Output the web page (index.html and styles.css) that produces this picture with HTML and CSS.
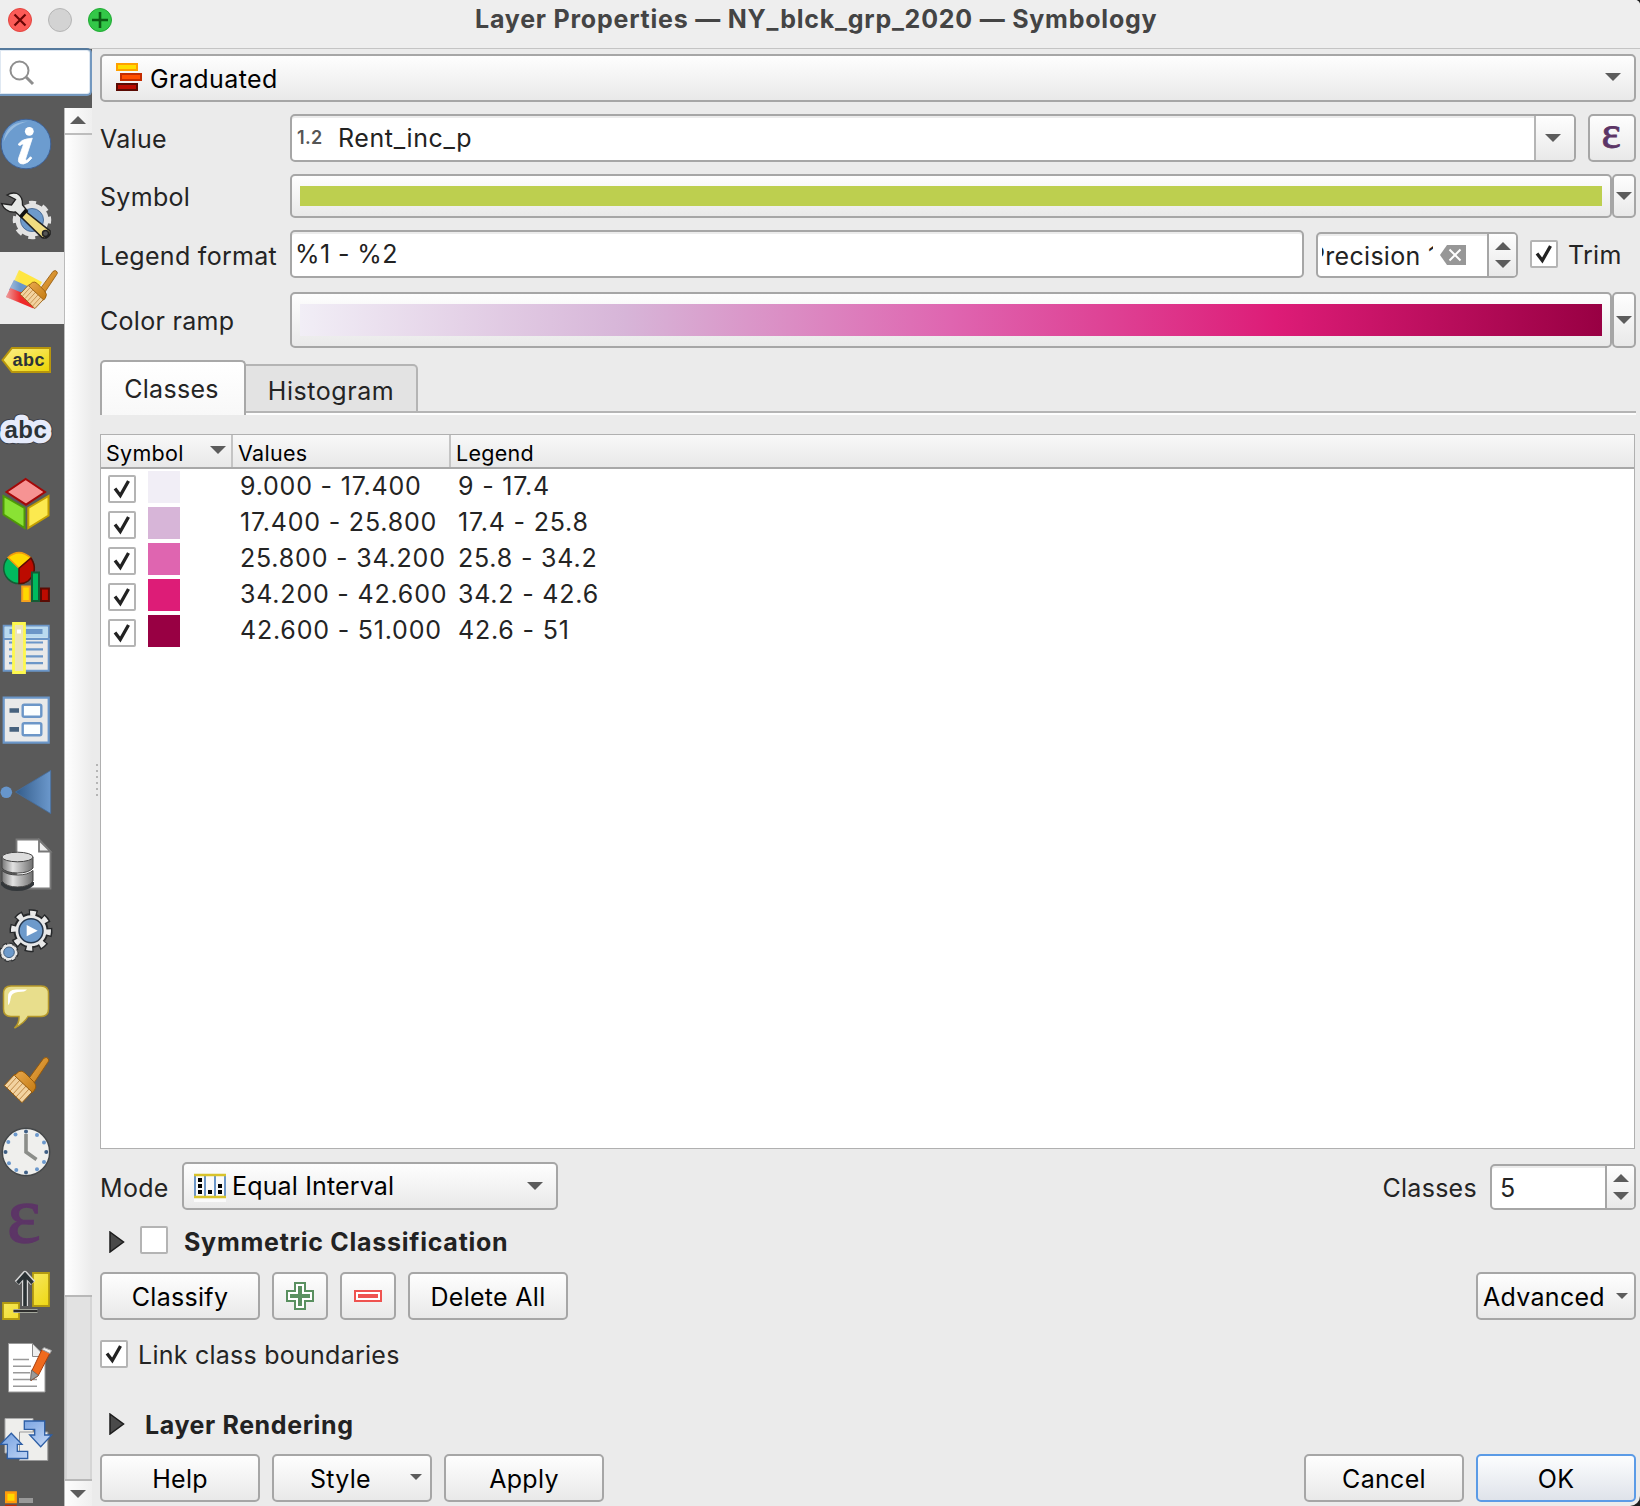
FILE: index.html
```html
<!DOCTYPE html>
<html lang="en">
<head>
<meta charset="utf-8">
<title>Layer Properties</title>
<link rel="stylesheet" href="styles.css">
</head>
<body>
<svg width="0" height="0" class="defs">
  <defs>
    <linearGradient id="gYellow" x1="0" y1="0" x2="1" y2="1"><stop offset="0" stop-color="#fcf08a"/><stop offset="1" stop-color="#ecd400"/></linearGradient>
    <linearGradient id="gWood" x1="0" y1="0" x2="1" y2="1"><stop offset="0" stop-color="#e9a94e"/><stop offset="1" stop-color="#c47a10"/></linearGradient>
    <linearGradient id="gCone" x1="0" y1="0" x2="1" y2="0"><stop offset="0" stop-color="#335c8a"/><stop offset="1" stop-color="#6b98cc"/></linearGradient>
    <linearGradient id="gMetal" x1="0" y1="0" x2="1" y2="0"><stop offset="0" stop-color="#777"/><stop offset=".35" stop-color="#e2e2e2"/><stop offset="1" stop-color="#6e6e6e"/></linearGradient>
    <linearGradient id="gArrow" x1="0" y1="0" x2="1" y2="1"><stop offset="0" stop-color="#5f92dc"/><stop offset="1" stop-color="#dbe7fb"/></linearGradient>
    <linearGradient id="gFade" x1="0" y1="0" x2="1" y2="0"><stop offset="0" stop-color="#ececec" stop-opacity=".6"/><stop offset=".4" stop-color="#ececec" stop-opacity="0"/></linearGradient>
    <symbol id="brush" viewBox="0 0 64 72" overflow="visible">
      <path d="M27 37 43.500 14.500q3-2.500 5 .500.800 2-.800 3.500L32 42z" fill="url(#gWood)" stroke="#94590b" stroke-width="1"/>
      <path d="M4.300 41.500 15 30 33 47 22 58.700z" fill="#f3d3a0" stroke="#94590b" stroke-width="1"/>
      <path d="m7 44 9-10M10 47l10-11M13 50l10-11M16 53l10-11M19 56l10-11" stroke="#c08a48" stroke-width="1"/>
      <path d="M14.500 31.500 19 27.500q3-1.500 6 1.500l8.500 8.500q4 4.500 1 8.500L32.500 48.500z" fill="url(#gWood)" stroke="#94590b" stroke-width="1"/>
    </symbol>
    <symbol id="tick" viewBox="0 0 24 24"><path d="M5 11.500 10.300 18.500 18.500 4" fill="none" stroke="#222" stroke-width="3.300"/></symbol>
    <symbol id="down" viewBox="0 0 16 8"><path d="M0 0h16L8 8z" fill="#5c5c5c"/></symbol>
    <symbol id="up" viewBox="0 0 16 8"><path d="M0 8h16L8 0z" fill="#5c5c5c"/></symbol>
    <symbol id="fold" viewBox="0 0 16 22"><path d="M1 1 14.500 11 1 21z" fill="#4a4a4a" stroke="#1c1c1c" stroke-width="1.500"/></symbol>
  </defs>
</svg>

<div class="window">
  <header class="titlebar">
    <div class="lights">
      <svg width="24" height="24" viewBox="0 0 24 24"><circle cx="12" cy="12" r="11.500" fill="#fc5b57" stroke="#e2443f"/><path d="m6.500 6.500 11 11m0-11-11 11" stroke="#6b0505" stroke-width="2.200"/></svg>
      <svg width="24" height="24" viewBox="0 0 24 24"><circle cx="12" cy="12" r="11.500" fill="#d3d3d3" stroke="#b5b5b5"/></svg>
      <svg width="24" height="24" viewBox="0 0 24 24"><circle cx="12" cy="12" r="11.500" fill="#33c748" stroke="#1faa33"/><path d="M4 12h16M12 4v16" stroke="#0b5c14" stroke-width="2.600"/></svg>
    </div>
    <h1 class="title">Layer Properties — NY_blck_grp_2020 — Symbology</h1>
  </header>

  <div class="body">
    <aside class="side">
      <div class="search">
        <svg width="26" height="26" viewBox="0 0 26 26" fill="none" stroke="#8e8e8e"><circle cx="10.500" cy="10.500" r="9" stroke-width="2"/><path d="m17 17 7 7" stroke-width="3"/></svg>
      </div>
      <div class="side-main">
        <nav class="icons">
          <svg class="item" viewBox="0 0 64 72"><circle cx="26" cy="36" r="24.800" fill="#6c9ccf" stroke="#3e6196" stroke-width="1"/><path d="M3.500 34Q6 14 28 13.500q-17 3-24.500 20.500" fill="#a3c3e4" opacity=".8"/><circle cx="29.300" cy="23.300" r="4.400" fill="#fff"/><path d="M18 36.500q3.500-5 9-5.600l5.300-.7-6.500 20q-.7 3 1.500 1.700l3.200-3.200 1.400 1.400q-4 5.300-8.500 5.900-6.300 0-4.700-6l4.500-12.800q.3-2.500-3.200.4z" fill="#fff" stroke="#fff" stroke-width=".8"/></svg>
          <svg class="item" viewBox="0 0 64 72"><circle cx="32" cy="40" r="15.500" fill="#e3e3e3" stroke="#e3e3e3" stroke-width="2"/><circle cx="32" cy="40" r="17" fill="none" stroke="#e3e3e3" stroke-width="4.500" stroke-dasharray="6.675 6.675" transform="rotate(-11 32 40)"/><circle cx="32" cy="40" r="11.500" fill="#6d9acb" stroke="#4d6f99"/><path d="M7 15q5-3 10-1.500 6 3 5.500 11.500l5 6-6 6.500-6-5.500q-10 1-14-8.500l10 1.500 4-5.500z" fill="#e6e8e6" stroke="#222" stroke-width="1.300"/><path d="m25 31-4.500 5.500 21.500 21q5 2 8-3.500v-3z" fill="#f0dc80" stroke="#222" stroke-width="1.600"/><path d="m26.500 30-6 7" stroke="#111" stroke-width="3.500"/><circle cx="45.500" cy="53.500" r="3" fill="#555" stroke="#222" stroke-width="1.500"/></svg>
          <svg class="item selected" viewBox="0 0 64 72"><path d="m19 18 23 12-5 10-23-11z" fill="#ffe640"/><path d="m14 28 24 11-5 9-24-10z" fill="#6795c9"/><path d="m10.500 36 24 10-1 10.500L6 45z" fill="#ee2a2a"/><path d="m19 18 23 12-9 27L6 45z" fill="url(#gFade)"/><use href="#brush" width="64" height="72" transform="translate(16.400 7.300) scale(.84)"/></svg>
          <svg class="item" viewBox="0 0 64 72"><path d="M2.500 36 12 24h38v24H12z" fill="url(#gYellow)" stroke="#b8960c" stroke-width="2"/><text x="12.500" y="41.800" class="abc small">abc</text></svg>
          <svg class="item" viewBox="0 0 64 72"><g class="abc big"><text x="4.500" y="41.500" stroke="#3c3f48" stroke-width="12.500">abc</text><text x="4.500" y="41.500" stroke="#e6ebfb" stroke-width="10.500">abc</text><text x="4.500" y="41.500">abc</text></g></svg>
          <svg class="item" viewBox="0 0 64 72" stroke-width="2"><path d="M25.700 11 45 24 26 36.700 6.500 24z" fill="#f69393" stroke="#a40808"/><path d="M3.500 28 24.500 40v20L3.500 46.500z" fill="#8ae234" stroke="#4e9a06"/><path d="M28.300 40 48.500 28v19.500L28.300 60z" fill="#fce94f" stroke="#c4a000"/></svg>
          <svg class="item" viewBox="0 0 64 72" stroke-width="1.500"><circle cx="19" cy="28.300" r="15.300" fill="#00bb5e" stroke="#145c35"/><path d="M19 28.300 8 17.500Q19 7.500 31 18z" fill="#ffd800" stroke="#f09a10"/><path d="M19 28.300 31 18q8 13-3 23-4 3-9 2.500z" fill="#bc0b00" stroke="#5a0c04"/><path d="M22.200 46.400h7.600v14.500h-7.600z" fill="#ffd800" stroke="#f7a21b" stroke-width="2"/><path d="M32 32.500h7v28.400h-7z" fill="#00bb5e" stroke="#145c35" stroke-width="2"/><path d="M41 48.500h7.900v12.400H41z" fill="#bc0b00" stroke="#5a0c04" stroke-width="2"/></svg>
          <svg class="item" viewBox="0 0 64 72"><path d="M3.700 13.700h45v45h-45z" fill="#e9e9e9" stroke="#6b96c8" stroke-width="2"/><path d="M4.700 14.700h43v11h-43z" fill="#b9daf0"/><path d="M3 27h47" stroke="#6b96c8" stroke-width="2"/><path d="M9.500 19.500h33" stroke="#6b96c8" stroke-width="5"/><path d="M9 30.500h34M9 37.300h34M9 44.300h34M9 51.200h34" stroke="#6b96c8" stroke-width="2.200"/><path d="M13.500 11.500h11v49h-11z" fill="#ece4b7" stroke="#fdf84e" stroke-width="2.800"/><path d="M17 17.500h4v4h-4z" fill="#fff"/></svg>
          <svg class="item" viewBox="0 0 64 72"><path d="M3.700 13.700h45v45h-45z" fill="#e9e9e9" stroke="#6b96c8" stroke-width="2.200"/><rect x="22.700" y="20.700" width="18.600" height="12" rx="1.500" fill="#fbfeff" stroke="#6b96c8" stroke-width="2.400"/><rect x="22.700" y="39.300" width="18.600" height="12" rx="1.500" fill="#fbfeff" stroke="#6b96c8" stroke-width="2.400"/><path d="M9.500 26.500H19M9.500 45.400H19" stroke="#47627e" stroke-width="4.600"/></svg>
          <svg class="item" viewBox="0 0 64 72"><circle cx="6.300" cy="36.300" r="5.800" fill="#6796cc"/><path d="m15.500 36 35.200-21.600v43.200z" fill="url(#gCone)" stroke="#456f9f" stroke-width=".8"/></svg>
          <svg class="item" viewBox="0 0 64 72"><path d="M16.500 11.500H39l11.500 12v37h-34z" fill="#fff" stroke="#7b7b7b" stroke-width="1.800"/><path d="M39 12v11.500h11.500z" fill="#eee" stroke="#777" stroke-width="1.800"/><path d="M1 54v3q5 6 16 6t17-6v-3z" fill="#33373a"/><path d="M2 29v11q4 5 15.500 5T33 40V29z" fill="url(#gMetal)" stroke="#444"/><path d="M2 42.500V53q4 6 15.500 6T33 53V42.500q-5 4.500-15.500 4.500T2 42.500" fill="url(#gMetal)" stroke="#444"/><ellipse cx="17.500" cy="29" rx="15.500" ry="4.800" fill="#dcdcdc" stroke="#444"/></svg>
          <svg class="item" viewBox="0 0 64 72"><g fill="none"><circle cx="31" cy="30.700" r="18" stroke="#26282a" stroke-width="7" stroke-dasharray="8.137 6" transform="rotate(-8 31 30.700)"/><circle cx="31" cy="30.700" r="16.500" fill="#e8e8e8" stroke="#26282a" stroke-width="2"/><circle cx="31" cy="30.700" r="17.500" stroke="#e8e8e8" stroke-width="5" stroke-dasharray="5.600 8.144" transform="rotate(-4.500 31 30.700)"/></g><circle cx="31" cy="30.700" r="12" fill="#6d9acb" stroke="#26384e" stroke-width="1.500"/><path d="m26.700 25 11 5.700-11 5.500z" fill="#fff"/><circle cx="9" cy="52.300" r="8" fill="#e8e8e8" stroke="#2d2f31" stroke-width="3.500" stroke-dasharray="4 2.283"/><circle cx="9" cy="52.300" r="7.800" fill="#e8e8e8" stroke="#e8e8e8" stroke-width="1.500" stroke-dasharray="3 3.126"/><circle cx="9" cy="52.300" r="5.300" fill="#6d9acb" stroke="#43607f"/></svg>
          <svg class="item" viewBox="0 0 64 72"><path d="M11 14h30q7.500 0 7.500 7.500V37q0 7.500-7.500 7.500H28q-4 7-13.500 11.500 5-5 4.500-11.500h-8Q3.500 44.500 3.500 37V21.500Q3.500 14 11 14z" fill="#e8de8c" stroke="#b5982a" stroke-width="1.500"/><path d="M8 33V25q0-7.500 8-7.500h11q-1.500 2.500-9 2.500-7 .500-7.500 7-.500 5-2.500 6" fill="#fff"/></svg>
          <svg class="item" viewBox="0 0 64 72"><use href="#brush" width="64" height="72"/></svg>
          <svg class="item" viewBox="0 0 64 72"><circle cx="26" cy="36" r="23.700" fill="#efefed" stroke="#45484a" stroke-width="1.500"/><g fill="#6b98cc"><circle cx="37" cy="19" r="2"/><circle cx="44" cy="26.500" r="2"/><circle cx="44" cy="46" r="2"/><circle cx="37" cy="53.300" r="2"/><circle cx="16.300" cy="54" r="2"/><circle cx="9" cy="47.300" r="2"/><circle cx="8.300" cy="26" r="2"/><circle cx="15.500" cy="18.500" r="2"/></g><g fill="#3f5f85"><circle cx="26" cy="15.500" r="2"/><circle cx="46.300" cy="36" r="2"/><circle cx="26" cy="56.500" r="2"/><circle cx="5.500" cy="36" r="2"/></g><path d="M26 18v18l10.500 7.500" fill="none" stroke="#8b8d89" stroke-width="3.600"/></svg>
          <svg class="item" viewBox="0 0 64 72"><text x="7" y="54" class="eps">ε</text></svg>
          <svg class="item" viewBox="0 0 64 72"><path d="M33 13h16v33H33zM3 43h16v16H3z" fill="url(#gYellow)" stroke="#b39a10" stroke-width="1.800"/><path d="M25 46V14M17 23l8-9 8 9" fill="none" stroke="#d8d8d8" stroke-width="6" stroke-linejoin="round"/><path d="M13.500 51h24" stroke="#a4a79c" stroke-width="4"/><path d="M25 46V14M17.500 23l7.500-8.500 7.500 8.500" fill="none" stroke="#2b3235" stroke-width="3.600"/><path d="M13.500 51h24" stroke="#222" stroke-width="1.800"/></svg>
          <svg class="item" viewBox="0 0 64 72"><path d="M8.500 11.500h24l12.500 13v35.500H8.500z" fill="#fff" stroke="#999"/><path d="M32.500 11.500v13H45z" fill="#eee" stroke="#888"/><path d="M13 27.500h16M13 34.200h18M13 40.800h17M13 47.500h24M13 54.200h24" stroke="#999" stroke-width="1.600"/><path d="m42 17.500 8 3.500-12 23-7 4.500.500-9z" fill="#f06a1d" stroke="#a83e0c"/><path d="m31.500 38 7 5.500-8 5z" fill="#999" stroke="#666" stroke-width=".8"/><path d="m42 17.500 2-2 7.500 3-1.500 3z" fill="#eee" stroke="#999"/></svg>
          <svg class="item" viewBox="0 0 64 72"><path d="M5 14.500h28V49H5z" fill="#eeeeec" stroke="#aaa"/><path d="M19.500 28h28.300v28.500H19.500z" fill="#eeeeec" stroke="#999"/><path d="M24.300 17h20.400v14h7l-11 11.700L29.700 31h5v-5.700H24.300zM27.700 54.500H7.300V40.300H.5l10.800-11 10.700 11h-4.700v7h10.400z" fill="url(#gArrow)" stroke="#2d5ea5" stroke-width="1.300"/></svg>
          <svg class="item" viewBox="0 0 64 72"><path d="M6.200 16.500h9.500V26H6.200z" fill="#ffd800" stroke="#ff9a0c" stroke-width="2.400"/><path d="M19 22h14v5H19z" fill="#999"/><path d="M5 28.700h11.700V30H5z" fill="#c22b00"/></svg>
        </nav>
        <div class="scroll">
          <div class="sbtn top"><svg width="16" height="8"><use href="#up"/></svg></div>
          <div class="handle"></div>
          <div class="groove"></div>
          <div class="sbtn bottom"><svg width="16" height="8"><use href="#down"/></svg></div>
        </div>
      </div>
    </aside>
    <div class="splitter"></div>

    <main class="panel">
      <div class="box btn renderer">
        <svg width="26" height="28" viewBox="0 0 26 28"><path d="M1 1h20v6H1z" fill="#ffdd00" stroke="#ffa000" stroke-width="2"/><path d="M5 11h20v6H5z" fill="#ff4d00" stroke="#c42b00" stroke-width="2"/><path d="M1 21h20v6H1z" fill="#bb0b00" stroke="#5a0a03" stroke-width="2"/></svg>
        <span class="t-grad">Graduated</span>
        <svg class="arrow" width="16" height="8"><use href="#down"/></svg>
      </div>

      <div class="row value">
        <label class="lab l-value">Value</label>
        <div class="box field valuebox">
          <span class="num">1.2</span><span class="t-rent">Rent_inc_p</span>
          <div class="drop"><svg width="16" height="8"><use href="#down"/></svg></div>
        </div>
        <div class="box btn exprbtn"><svg width="24" height="40"><text x="1.500" y="30" class="eps mini">ε</text></svg></div>
      </div>

      <div class="row symbol">
        <label class="lab l-symbol">Symbol</label>
        <div class="box btn preview"><div class="bar green"></div></div>
        <div class="box btn narrow"><svg width="16" height="8"><use href="#down"/></svg></div>
      </div>

      <div class="row legend">
        <label class="lab l-legend">Legend format</label>
        <div class="box field fmt"><span class="t-fmt">%1 - %2</span></div>
        <div class="box field precision">
          <div class="clip"><span>Precision 1</span></div>
          <svg class="clear" width="26" height="20" viewBox="0 0 26 20"><path d="M0 10 7 0h19v20H7z" fill="#979797"/><path d="m9.500 4.500 11 11m0-11-11 11" stroke="#fff" stroke-width="2"/></svg>
          <div class="spin"><svg width="16" height="8"><use href="#up"/></svg><svg width="16" height="8"><use href="#down"/></svg></div>
        </div>
        <svg class="check trimcheck"><use href="#tick"/></svg>
        <span class="lab t-trim">Trim</span>
      </div>

      <div class="row ramp">
        <label class="lab l-ramp">Color ramp</label>
        <div class="box btn preview"><div class="bar pinks"></div></div>
        <div class="box btn narrow"><svg width="16" height="8"><use href="#down"/></svg></div>
      </div>

      <div class="tabs">
        <div class="tab active"><span class="t-tab1">Classes</span></div>
        <div class="tab"><span class="t-tab2">Histogram</span></div>
      </div>

      <div class="table">
        <div class="thead">
          <div class="th c1"><span class="h1">Symbol</span><svg width="16" height="8"><use href="#down"/></svg></div>
          <div class="th c2"><span class="h2">Values</span></div>
          <div class="th c3"><span class="h3">Legend</span></div>
        </div>
        <div class="tr"><svg class="check"><use href="#tick"/></svg><i class="sw s1"></i><span class="v">9.000 - 17.400</span><span class="g">9 - 17.4</span></div>
        <div class="tr"><svg class="check"><use href="#tick"/></svg><i class="sw s2"></i><span class="v">17.400 - 25.800</span><span class="g">17.4 - 25.8</span></div>
        <div class="tr"><svg class="check"><use href="#tick"/></svg><i class="sw s3"></i><span class="v">25.800 - 34.200</span><span class="g">25.8 - 34.2</span></div>
        <div class="tr"><svg class="check"><use href="#tick"/></svg><i class="sw s4"></i><span class="v">34.200 - 42.600</span><span class="g">34.2 - 42.6</span></div>
        <div class="tr"><svg class="check"><use href="#tick"/></svg><i class="sw s5"></i><span class="v">42.600 - 51.000</span><span class="g">42.6 - 51</span></div>
      </div>

      <div class="row mode">
        <label class="lab l-mode">Mode</label>
        <div class="box btn modebox">
          <svg width="32" height="32" viewBox="0 0 32 32"><path d="M0 0h32v32H0z" fill="#fafafa"/><path d="M1 5v22M11 5v22M21 5v22M31 5v22" stroke="#6b96c8" stroke-width="2"/><path d="M0 5h32M0 27h32" stroke="#d8c32c" stroke-width="2.500"/><path d="M4 8h4v4H4zM4 14h4v4H4zM4 20h4v4H4zM14 20h4v4h-4zM24 14h4v4h-4zM24 20h4v4h-4z"/></svg>
          <span class="t-equal">Equal Interval</span>
          <svg class="arrow" width="16" height="8"><use href="#down"/></svg>
        </div>
        <label class="lab l-classes">Classes</label>
        <div class="box field count"><span>5</span><div class="spin"><svg width="16" height="8"><use href="#up"/></svg><svg width="16" height="8"><use href="#down"/></svg></div></div>
      </div>

      <div class="row symm"><svg width="16" height="22"><use href="#fold"/></svg><span class="check empty"></span><b class="t-symm">Symmetric Classification</b></div>

      <div class="row actions">
        <div class="box btn wide"><span class="t-classify">Classify</span></div>
        <div class="box btn sq"><svg width="28" height="28" viewBox="0 0 28 28"><path d="M9 1h10v8h8v10h-8v8H9v-8H1V9h8z" fill="#fff" stroke="#5a9060" stroke-width="2"/><path d="M14 4v20M4 14h20" stroke="#5a9060" stroke-width="4"/></svg></div>
        <div class="box btn sq"><svg width="28" height="12" viewBox="0 0 28 12"><path d="M1 1h26v10H1z" fill="#fff" stroke="#ef5350" stroke-width="2"/><path d="M4 6h20" stroke="#ef5350" stroke-width="4"/></svg></div>
        <div class="box btn wide"><span class="t-delete">Delete All</span></div>
        <div class="box btn wide end adv"><span class="t-adv">Advanced</span><svg width="12" height="6"><use href="#down"/></svg></div>
      </div>

      <div class="row link"><svg class="check"><use href="#tick"/></svg><span class="lab t-link">Link class boundaries</span></div>

      <div class="row rendering"><svg width="16" height="22"><use href="#fold"/></svg><b class="t-render">Layer Rendering</b></div>

      <div class="row footer">
        <div class="box btn wide"><span class="t-help">Help</span></div>
        <div class="box btn wide style"><span class="t-style">Style</span><svg width="12" height="6"><use href="#down"/></svg></div>
        <div class="box btn wide"><span class="t-apply">Apply</span></div>
        <div class="box btn wide end"><span class="t-cancel">Cancel</span></div>
        <div class="box btn wide ok"><span>OK</span></div>
      </div>
    </main>
  </div>
</div>
</body>
</html>
```
FILE: styles.css
```css
* { box-sizing: border-box; }
body { margin: 0; background: #1e1e1e; font: 25px/30px Inter, "Liberation Sans", sans-serif; color: #000; letter-spacing: .3px; }
svg { display: block; flex: none; }
.defs { position: absolute; }
span, label, b { white-space: nowrap; }

.window { width: 1640px; height: 1506px; overflow: hidden; background: #ebebeb; border-radius: 0 5px 10px 0; display: flex; flex-direction: column; }
.titlebar { flex: none; height: 49px; background: #eee; border-bottom: 1px solid #c4c4c4; display: flex; }
.lights { display: flex; gap: 16px; padding: 8px 0 0 8px; }
.title { margin: 4px 0 0 363px; font-size: 25px; line-height: 30px; font-weight: 700; color: #444; white-space: nowrap; letter-spacing: .78px; }

.body { flex: 1; min-height: 0; display: flex; }
.side { width: 92px; flex: none; display: flex; flex-direction: column; background: #5a5a5a; }
.search { height: 48px; margin-top: -1px; flex: none; background: #fff; border: 2px solid #7398bf; border-left: 0; border-top-color: #55799c; border-radius: 0 5px 5px 0; box-shadow: inset 0 0 0 1px #dfe8f2; padding: 10px 0 0 9px; }
.side-main { flex: 1; min-height: 0; margin-top: 12px; display: flex; }
.icons { width: 64px; overflow: hidden; }
.item { width: 64px; height: 72px; overflow: visible; }
.item.selected { background: #ececec; }
.abc { font-family: "Liberation Sans", sans-serif; font-weight: 700; fill: #2b3338; letter-spacing: 0; stroke-linejoin: round; }
.small { font-size: 18px; letter-spacing: .5px; }
.big { font-size: 24px; letter-spacing: .5px; }
.eps { font-family: "Liberation Serif", serif; font-size: 80px; fill: #5c3566; stroke: #5c3566; stroke-width: 1.500px; letter-spacing: 0; }
.mini { font-size: 46px; stroke-width: .8px; }
.scroll { width: 28px; display: flex; flex-direction: column; border-left: 1px solid #bbb; background: linear-gradient(90deg, #fff, #ebebeb); }
.sbtn { flex: none; display: flex; justify-content: center; padding-right: 1px; background: linear-gradient(90deg, #fdfdfd, #efefef); }
.top { height: 27px; border-bottom: 2px solid #bdbdbd; padding-top: 8px; }
.handle { height: 1160px; flex: none; }
.groove { flex: 1; background: #e2e2e2; border: 2px solid #b8b8b8; border-width: 2px 0; box-shadow: inset 2px 0 #d5d5d5, inset -2px 0 #d5d5d5; }
.bottom { height: 25px; padding-top: 9px; }
.splitter { width: 8px; flex: none; margin-top: 713px; height: 36px; background: linear-gradient(#b5b5b5 2px, transparent 2px) 4px 2px / 2px 6px repeat-y; }

.panel { width: 1536px; display: flex; flex-direction: column; padding-top: 5px; }
.row { display: flex; flex: none; }
.box { border: 2px solid #a6a6a6; border-radius: 5px; display: flex; align-items: center; flex: none; }
.btn { background: linear-gradient(#fefefe, #e9e9e9); }
.field { background: #fff; box-shadow: inset 0 2px #ececec; }
.lab { color: #242424; flex: none; }
.arrow { margin-left: auto; }

.renderer { height: 48px; padding: 0 13px 2px 14px; }
.t-grad { margin: 4px 0 0 8px; letter-spacing: .4px; }
.value { height: 48px; margin-top: 12px; align-items: center; }
.row > label.lab { width: 190px; }
.row > label.l-value, .row > label.l-symbol { padding-top: 2px; }
.valuebox { width: 1286px; height: 48px; padding-left: 5px; color: #222; }
.num { font-size: 18px; font-weight: 600; color: #555; width: 41px; }
.t-rent { letter-spacing: .6px; }
.drop { margin-left: auto; height: 44px; width: 40px; border-left: 2px solid #b5b5b5; background: linear-gradient(#fefefe, #e9e9e9); display: flex; align-items: center; justify-content: center; padding: 0 4px 1px 0; border-radius: 0 3px 3px 0; }
.exprbtn { width: 48px; height: 48px; margin-left: 12px; padding-left: 10px; }

.symbol { margin-top: 12px; height: 44px; align-items: center; }
.preview { width: 1322px; height: 100%; padding-left: 8px; }
.bar { width: 1302px; }
.green { height: 20px; background: #bdcf4f; }
.pinks { height: 32px; background: linear-gradient(90deg, #f1eef6, #d7b5d8 25%, #df65b0 50%, #dd1c77 75%, #980043); }
.narrow { width: 24px; height: 100%; justify-content: center; }

.legend { margin-top: 12px; height: 48px; }
.legend > label.lab { padding-top: 11px; }
.fmt { width: 1014px; height: 48px; padding-left: 3px; color: #222; }
.t-fmt { letter-spacing: .4px; }
.precision { width: 202px; height: 46px; margin: 2px 0 0 12px; color: #222; padding-left: 4px; }
.clip { width: 111px; overflow: hidden; }
.clip span { display: block; margin: 2px 0 0 -13px; }
.clear { margin-left: 7px; }
.spin { margin-left: auto; width: 30px; height: 42px; border-left: 2px solid #a6a6a6; border-radius: 0 3px 3px 0; background: linear-gradient(#fefefe, #e9e9e9); display: flex; flex-direction: column; align-items: center; justify-content: center; gap: 10px; }
.precision .spin, .count .spin { width: 29px; }
.check { width: 28px; height: 28px; border: 2px solid #b4b4b4; background: #fff; flex: none; border-radius: 2px; overflow: hidden; }
.trimcheck { margin: 10px 0 0 12px; }
.t-trim { margin: 10px 0 0 10px; }

.ramp { margin-top: 14px; height: 56px; align-items: center; }
.l-ramp { padding-top: 2px; }

.tabs { height: 55px; margin-top: 12px; display: flex; align-items: flex-start; background: linear-gradient(#b4b4b4 2px, #fdfdfd 2px) 0 51px / 100% 4px no-repeat; }
.tab { width: 172px; height: 49px; margin-top: 4px; border: 2px solid #b4b4b4; border-left: 0; border-radius: 0 5px 0 0; background: #e3e3e3; color: #242424; display: flex; justify-content: center; padding-top: 10px; }
.t-tab2 { letter-spacing: .55px; }
.tab.active { width: 146px; height: 55px; margin: 0; border: 2px solid #a8a8a8; border-bottom: 0; border-radius: 5px 5px 0 0; background: linear-gradient(#fff, #f8f8f8); padding: 12px 3px 0 0; }

.table { width: 1535px; height: 715px; margin-top: 19px; border: 1px solid #b0b0b0; background: #fff; flex: none; }
.thead { height: 34px; display: flex; background: linear-gradient(#f8f8f8, #e8e8e8); border-bottom: 2px solid #a8a8a8; font-size: 21.500px; margin-bottom: 1px; }
.th { border-right: 2px solid #c4c4c4; display: flex; align-items: center; padding: 4px 0 0 5px; }
.c1 { width: 132px; }
.c1 svg { margin: 0 5px 6px auto; }
.c2 { width: 218px; }
.c3 { flex: 1; border: 0; }
.tr { height: 36px; display: flex; align-items: center; padding-left: 7px; color: #242424; letter-spacing: .8px; }
.tr .check { margin-top: 1px; }
.sw { width: 32px; height: 32px; margin: -2px 0 0 12px; }
.s1 { background: #f1eef6; }
.s2 { background: #d7b5d8; }
.s3 { background: #df65b0; }
.s4 { background: #dd1c77; }
.s5 { background: #980043; }
.v { width: 218px; margin: -5px 0 0 60px; }
.g { margin-top: -5px; }

.mode { margin-top: 13px; height: 48px; align-items: center; }
.row > label.l-mode { width: 82px; padding-top: 3px; }
.modebox { width: 376px; height: 48px; padding: 0 13px 0 10px; }
.t-equal { margin: 0 0 0 6px; letter-spacing: .15px; }
.row > label.l-classes { width: auto; margin-left: auto; padding-top: 3px; }
.count { width: 146px; height: 46px; margin: 2px 0 0 13px; padding-left: 8px; color: #242424; }
.count > span { margin-top: 2px; }

.symm { margin-top: 16px; height: 28px; align-items: center; padding-left: 9px; color: #222; }
.symm svg { margin-top: 3px; }
.empty { margin-left: 15px; }
.t-symm { margin: 4px 0 0 16px; letter-spacing: .74px; }
.actions { margin-top: 18px; gap: 12px; }
.wide { width: 160px; height: 48px; justify-content: center; }
.wide span { margin-top: 2px; }
.sq { width: 56px; height: 48px; justify-content: center; }
.end { margin-left: auto; }
.adv { gap: 11px; padding-right: 4px; }
.adv .t-adv { margin-left: 3px; }
.link { margin-top: 20px; height: 28px; align-items: center; }
.t-link { margin: 2px 0 0 10px; letter-spacing: .25px; }
.rendering { margin-top: 42px; height: 28px; align-items: center; padding-left: 9px; color: #222; }
.t-render { margin: 2px 0 0 20px; letter-spacing: .6px; }
.footer { margin-top: 16px; gap: 12px; }
.style svg { margin: 0 0 2px 39px; }
.style { justify-content: flex-end; padding-right: 8px; }
.ok { border-color: #5b9be6; background: linear-gradient(#fcfdfe, #dfe3ea); }
```
